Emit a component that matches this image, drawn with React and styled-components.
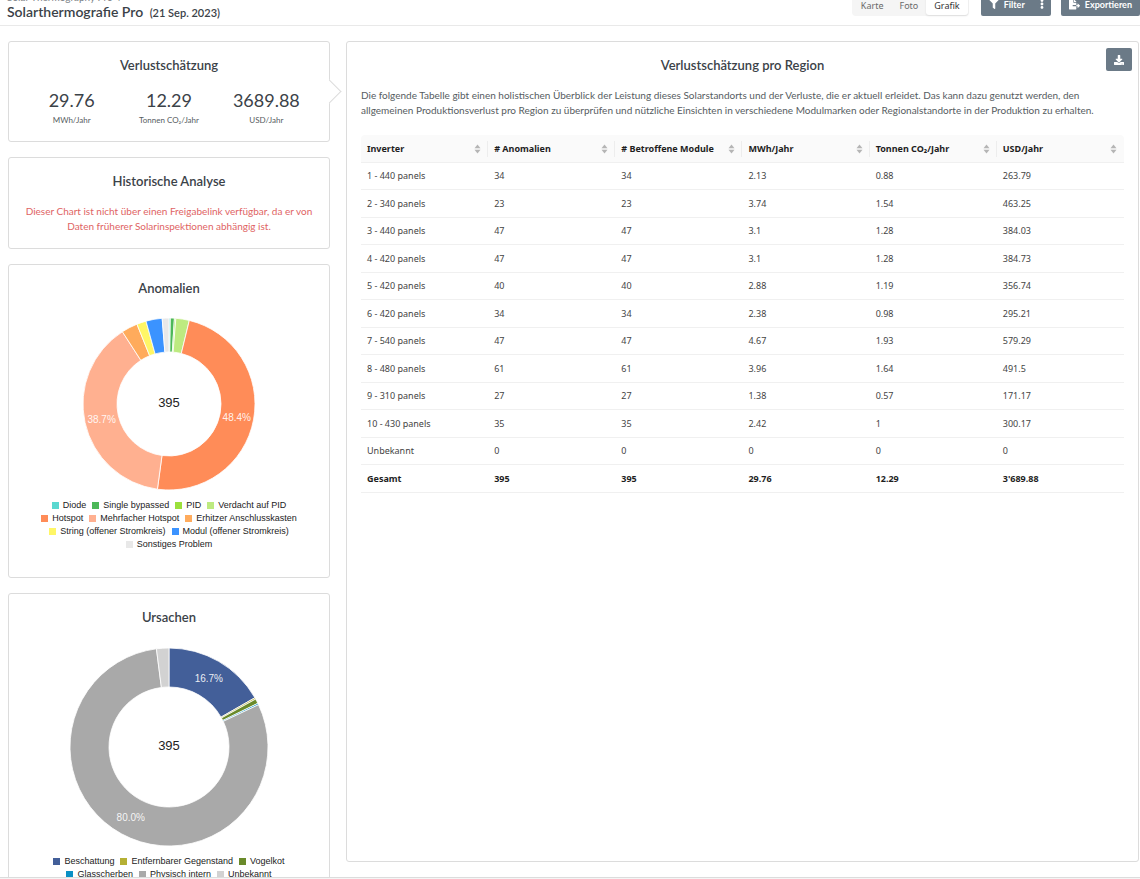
import styled, { createGlobalStyle } from "styled-components";
import { FaDownload, FaEllipsisV, FaFileExport, FaFilter } from "react-icons/fa";

const regions = [
  ["1 - 440 panels", "34", "34", "2.13", "0.88", "263.79"],
  ["2 - 340 panels", "23", "23", "3.74", "1.54", "463.25"],
  ["3 - 440 panels", "47", "47", "3.1", "1.28", "384.03"],
  ["4 - 420 panels", "47", "47", "3.1", "1.28", "384.73"],
  ["5 - 420 panels", "40", "40", "2.88", "1.19", "356.74"],
  ["6 - 420 panels", "34", "34", "2.38", "0.98", "295.21"],
  ["7 - 540 panels", "47", "47", "4.67", "1.93", "579.29"],
  ["8 - 480 panels", "61", "61", "3.96", "1.64", "491.5"],
  ["9 - 310 panels", "27", "27", "1.38", "0.57", "171.17"],
  ["10 - 430 panels", "35", "35", "2.42", "1", "300.17"],
  ["Unbekannt", "0", "0", "0", "0", "0"],
];

const total = ["Gesamt", "395", "395", "29.76", "12.29", "3'689.88"];

const columns = [
  "Inverter",
  "# Anomalien",
  "# Betroffene Module",
  "MWh/Jahr",
  "Tonnen CO₂/Jahr",
  "USD/Jahr",
];

const metrics = [
  { value: "29.76", unit: "MWh/Jahr" },
  { value: "12.29", unit: "Tonnen CO₂/Jahr" },
  { value: "3689.88", unit: "USD/Jahr" },
];

const anomalies = [
  { name: "Diode", count: 1, color: "#5ad8d0" },
  { name: "Single bypassed", count: 3, color: "#4cb858" },
  { name: "PID", count: 1, color: "#9be03c" },
  { name: "Verdacht auf PID", count: 10, color: "#bdea80" },
  { name: "Hotspot", count: 191, color: "#ff8c58" },
  { name: "Mehrfacher Hotspot", count: 153, color: "#ffb090" },
  { name: "Erhitzer Anschlusskasten", count: 12, color: "#ffab5c" },
  { name: "String (offener Stromkreis)", count: 7, color: "#fff666" },
  { name: "Modul (offener Stromkreis)", count: 12, color: "#3b93ff" },
  { name: "Sonstiges Problem", count: 5, color: "#e8e8e8" },
];

const causes = [
  { name: "Beschattung", count: 66, color: "#435f99" },
  { name: "Entfernbarer Gegenstand", count: 1, color: "#b5b034" },
  { name: "Vogelkot", count: 3, color: "#6a8a2a" },
  { name: "Glasscherben", count: 1, color: "#0a90c4" },
  { name: "Physisch intern", count: 316, color: "#a9a9a9" },
  { name: "Unbekannt", count: 8, color: "#d2d2d2" },
];

const GlobalStyle = createGlobalStyle`
  * {
    box-sizing: border-box;
  }

  body {
    margin: 0;
    background: #fff;
    color: #3b4248;
    font-family: Lato, sans-serif;
  }

  button {
    font-family: inherit;
  }
`;

const Page = styled.div`
  display: flex;
  flex-direction: column;
  height: 100vh;
  overflow: hidden;
`;

const Header = styled.header`
  display: flex;
  flex: none;
  align-items: flex-end;
  justify-content: space-between;
  height: 26px;
  padding-left: 7px;
  border-bottom: 1px solid #e9e9e9;
`;

const Heading = styled.div`
  padding-bottom: 3px;
`;

const Crumb = styled.a`
  display: block;
  color: #7c8287;
  font-size: 10px;
  line-height: 12px;
  text-decoration: none;
`;

const PageTitle = styled.h1`
  margin: 0;
  font-size: 14px;
  font-weight: 600;
  line-height: 18px;

  span {
    margin-left: 3px;
    font-size: 11px;
  }
`;

const Toolbar = styled.div`
  display: flex;
  align-items: flex-end;
  padding-bottom: 9px;
`;

const Segments = styled.div`
  display: flex;
  margin-right: 12px;
  padding: 1px;
  background: #f5f5f5;
  border-radius: 4px;
`;

const Segment = styled.button`
  height: 19px;
  padding: 0 8px;
  border: none;
  border-radius: 3px;
  background: ${({ $active }) => ($active ? "#fff" : "transparent")};
  box-shadow: ${({ $active }) => ($active ? "0 1px 2px rgba(0, 0, 0, 0.1)" : "none")};
  color: ${({ $active }) => ($active ? "#333" : "#6a6a6a")};
  font-family: "Noto Sans", sans-serif;
  font-size: 9px;
  line-height: 19px;
`;

const ToolButton = styled.button`
  display: flex;
  align-items: center;
  gap: 5px;
  height: 24px;
  padding: 0 8px;
  border: none;
  border-radius: 2px;
  background: #6b7a87;
  color: #fff;
  font-size: 9px;
  font-weight: 700;
`;

const MoreButton = styled(ToolButton)`
  padding: 0 4px;
`;

const ButtonGroup = styled.div`
  display: flex;
  margin-right: 10px;

  button:first-child {
    border-radius: 2px 0 0 2px;
  }

  button:last-child {
    border-radius: 0 2px 2px 0;
  }
`;

const Main = styled.main`
  display: grid;
  flex: 1;
  grid-template-columns: minmax(322px, 2fr) minmax(0, 5fr);
  grid-template-rows: minmax(0, 1fr);
  gap: 16px;
  min-height: 0;
  padding: 15px 1px 0 8px;
  overflow: hidden;
`;

const Sidebar = styled.div`
  display: flex;
  flex-direction: column;
  gap: 15px;
`;

const Card = styled.section`
  position: relative;
  flex: none;
  padding: 14px;
  border: 1px solid #dcdcdc;
  border-radius: 3px;
  text-align: center;
`;

const CardTitle = styled.h2`
  margin: 0;
  font-size: 13px;
  font-weight: 600;
  line-height: 18px;
`;

// marks the card whose details are open in the right panel
const Pointer = styled.span`
  position: absolute;
  top: 41px;
  right: -9px;
  width: 17px;
  height: 17px;
  border: 1px solid #dcdcdc;
  border-width: 1px 1px 0 0;
  background: #fff;
  transform: rotate(45deg);
`;

const Metrics = styled.div`
  display: grid;
  grid-template-columns: repeat(3, 1fr);
  padding-top: 15px;
`;

const MetricValue = styled.div`
  font-size: 18px;
  line-height: 22px;
`;

const MetricUnit = styled.div`
  padding-top: 3px;
  color: #565c61;
  font-size: 8px;
  line-height: 13px;
`;

const Warning = styled.p`
  margin: 0;
  padding-top: 14px;
  color: #e06464;
  font-size: 10px;
  line-height: 15px;
`;

const Chart = styled.svg`
  display: block;
  margin: ${({ $gap }) => $gap} auto 0;
  font-family: "Liberation Sans", Arial, sans-serif;
  text-anchor: middle;
`;

const Legend = styled.ul`
  display: flex;
  flex-wrap: wrap;
  justify-content: center;
  column-gap: 6px;
  margin: 0 auto;
  padding: 8px 0 12px;
  width: 262px;
  list-style: none;
  color: #222;
  font-family: "Liberation Sans", Arial, sans-serif;
  font-size: 9px;
  line-height: 13px;
`;

const LegendItem = styled.li`
  display: flex;
  align-items: center;
  gap: 4px;
  white-space: nowrap;

  &::before {
    width: 7px;
    height: 7px;
    background: ${({ $color }) => $color};
    content: "";
  }
`;

const Panel = styled.section`
  margin-bottom: 15px;
  border: 1px solid #dcdcdc;
  border-radius: 3px;
`;

const PanelHeader = styled.div`
  display: grid;
  grid-template-columns: 1fr auto 1fr;
  padding: 6px 6px 0;
`;

const PanelTitle = styled(CardTitle)`
  grid-column: 2;
  padding-top: 8px;
`;

const DownloadButton = styled.button`
  display: flex;
  align-items: center;
  justify-content: center;
  justify-self: end;
  width: 26px;
  height: 23px;
  padding: 0;
  border: none;
  border-radius: 2px;
  background: #6b7a87;
  color: #fff;
`;

const PanelBody = styled.div`
  padding: 14px;
`;

const Description = styled.p`
  margin: 0 0 17px;
  color: #565c61;
  font-size: 10px;
  line-height: 15px;
`;

const Table = styled.table`
  width: 100%;
  border-collapse: separate;
  border-spacing: 0;
  table-layout: fixed;
  color: #444;
  font-family: "Noto Sans", sans-serif;
  font-size: 9px;
  line-height: 14px;
  text-align: left;

  th {
    height: 28px;
    padding: 0 0 0 6px;
    border-bottom: 1px solid #f0f0f0;
    background: #fafafa;
    color: #1e1e1e;
    font-weight: 700;
  }

  th:first-child {
    border-top-left-radius: 4px;
  }

  th:last-child {
    border-top-right-radius: 4px;
  }

  td {
    height: 27px;
    padding: 0 6px;
    border-bottom: 1px solid #f0f0f0;
  }

  tr:nth-child(even) td {
    height: 28px;
  }
`;

const TotalRow = styled.tr`
  color: #1e1e1e;
  font-weight: 700;
`;

const ColumnHead = styled.div`
  display: flex;
  align-items: center;
  justify-content: space-between;
  height: 16px;
  padding-right: 6px;
  border-right: 1px solid #ededed;
  white-space: nowrap;

  th:last-child & {
    border-color: transparent;
  }
`;

const Footer = styled.footer`
  flex: none;
  height: 2px;
  border-top: 1px solid #dcdcdc;
  background: #f5f5f5;
`;

const SortIcon = () => (
  <svg width="7" height="10" viewBox="0 0 7 10" fill="#b5b5b5" aria-hidden="true">
    <path d="M3.5 0.5 6.5 4.2h-6z" />
    <path d="M3.5 9.5 6.5 5.8h-6z" />
  </svg>
);

const point = (center, radius, share) => {
  const angle = share * Math.PI * 2;
  return `${center + radius * Math.sin(angle)} ${center - radius * Math.cos(angle)}`;
};

const Donut = ({ items, radius, hole, gap }) => {
  const sum = items.reduce((acc, item) => acc + item.count, 0);
  const center = radius + 1;
  const size = center * 2;
  let passed = 0;

  const slices = items.map((item) => {
    const start = passed / sum;
    passed += item.count;
    const end = passed / sum;
    const large = end - start > 0.5 ? 1 : 0;
    const [x, y] = point(center, (radius + hole) / 2, (start + end) / 2).split(" ");
    return {
      ...item,
      share: end - start,
      x,
      y,
      path: `M${point(center, radius, start)}A${radius} ${radius} 0 ${large} 1 ${point(center, radius, end)}L${point(center, hole, end)}A${hole} ${hole} 0 ${large} 0 ${point(center, hole, start)}Z`,
    };
  });

  return (
    <Chart $gap={gap} width={size} height={size} viewBox={`0 0 ${size} ${size}`}>
      {slices.map((slice) => (
        <path key={slice.name} d={slice.path} fill={slice.color} stroke="#fff" strokeWidth="1" strokeOpacity="0.8" />
      ))}
      {slices
        .filter((slice) => slice.share > 0.1)
        .map((slice) => (
          <text key={slice.name} x={slice.x} y={slice.y} dy="4" fill="#fff" fillOpacity="0.9" fontSize="10">
            {(slice.share * 100).toFixed(1)}%
          </text>
        ))}
      <text x={center} y={center} dy="3" fill="#222" fontSize="13">
        {sum}
      </text>
    </Chart>
  );
};

const ChartCard = ({ title, items, radius, hole, gap }) => (
  <Card>
    <CardTitle>{title}</CardTitle>
    <Donut items={items} radius={radius} hole={hole} gap={gap} />
    <Legend>
      {items.map((item) => (
        <LegendItem key={item.name} $color={item.color}>
          {item.name}
        </LegendItem>
      ))}
    </Legend>
  </Card>
);

const App = () => (
  <>
    <GlobalStyle />
    <Page>
      <Header>
        <Heading>
          <Crumb href="#">Solar Thermography Pro 4</Crumb>
          <PageTitle>
            Solarthermografie Pro <span>(21 Sep. 2023)</span>
          </PageTitle>
        </Heading>
        <Toolbar>
          <Segments>
            <Segment>Karte</Segment>
            <Segment>Foto</Segment>
            <Segment $active>Grafik</Segment>
          </Segments>
          <ButtonGroup>
            <ToolButton>
              <FaFilter size={10} />
              Filter
            </ToolButton>
            <MoreButton aria-label="Mehr">
              <FaEllipsisV size={10} />
            </MoreButton>
          </ButtonGroup>
          <ToolButton>
            <FaFileExport size={11} />
            Exportieren
          </ToolButton>
        </Toolbar>
      </Header>
      <Main>
        <Sidebar>
          <Card>
            <CardTitle>Verlustschätzung</CardTitle>
            <Metrics>
              {metrics.map(({ value, unit }) => (
                <div key={unit}>
                  <MetricValue>{value}</MetricValue>
                  <MetricUnit>{unit}</MetricUnit>
                </div>
              ))}
            </Metrics>
            <Pointer />
          </Card>
          <Card>
            <CardTitle>Historische Analyse</CardTitle>
            <Warning>
              Dieser Chart ist nicht über einen Freigabelink verfügbar, da er von Daten früherer
              Solarinspektionen abhängig ist.
            </Warning>
          </Card>
          <ChartCard title="Anomalien" items={anomalies} radius={86} hole={52} gap="20px" />
          <ChartCard title="Ursachen" items={causes} radius={99} hole={60} gap="21px" />
        </Sidebar>
        <Panel>
          <PanelHeader>
            <PanelTitle>Verlustschätzung pro Region</PanelTitle>
            <DownloadButton aria-label="Herunterladen">
              <FaDownload size={10} />
            </DownloadButton>
          </PanelHeader>
          <PanelBody>
            <Description>
              Die folgende Tabelle gibt einen holistischen Überblick der Leistung dieses Solarstandorts
              und der Verluste, die er aktuell erleidet. Das kann dazu genutzt werden, den allgemeinen
              Produktionsverlust pro Region zu überprüfen und nützliche Einsichten in verschiedene
              Modulmarken oder Regionalstandorte in der Produktion zu erhalten.
            </Description>
            <Table>
              <thead>
                <tr>
                  {columns.map((column) => (
                    <th key={column} scope="col">
                      <ColumnHead>
                        {column}
                        <SortIcon />
                      </ColumnHead>
                    </th>
                  ))}
                </tr>
              </thead>
              <tbody>
                {regions.map((row) => (
                  <tr key={row[0]}>
                    {row.map((cell, index) => (
                      <td key={columns[index]}>{cell}</td>
                    ))}
                  </tr>
                ))}
                <TotalRow>
                  {total.map((cell, index) => (
                    <td key={columns[index]}>{cell}</td>
                  ))}
                </TotalRow>
              </tbody>
            </Table>
          </PanelBody>
        </Panel>
      </Main>
      <Footer />
    </Page>
  </>
);

export default App;
